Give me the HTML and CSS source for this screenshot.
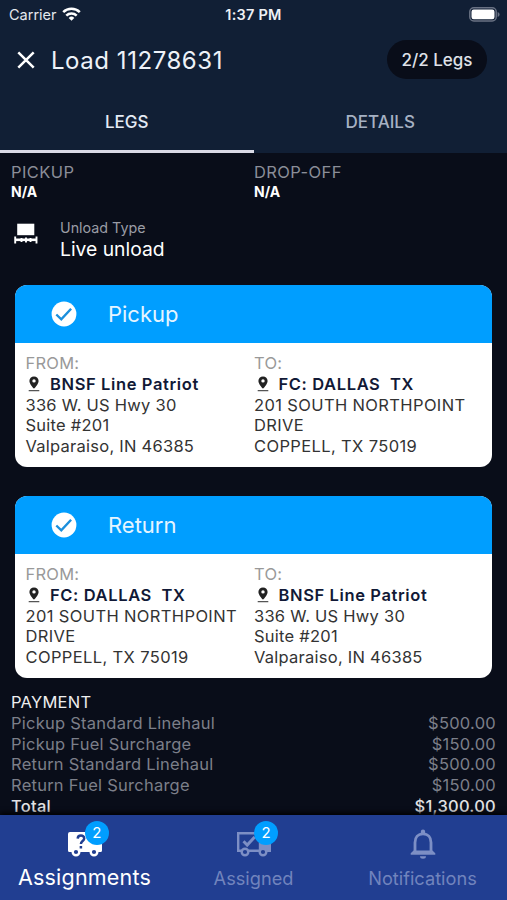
FILE: index.html
```html
<!DOCTYPE html>
<html lang="en">
<head>
<meta charset="utf-8">
<title>Load 11278631</title>
<link rel="stylesheet" href="styles.css">
</head>
<body>
<svg class="defs" width="0" height="0">
  <symbol id="check" viewBox="0 0 26 26"><circle cx="13" cy="13" r="12.4" fill="#fff"/><path d="M5.300 13.500l5 4.800 9.800-10.500" fill="none" stroke="#1b8fdc" stroke-width="2.4"/></symbol>
  <symbol id="pin" viewBox="0 0 12 16"><path fill-rule="evenodd" d="M6 .5C3.300.5 1.400 2.500 1.400 4.900 1.400 8.200 6 12.600 6 12.600S10.600 8.200 10.600 4.900C10.600 2.500 8.700.5 6 .5zM6 3.200a1.700 1.700 0 1 1 0 3.400 1.700 1.700 0 0 1 0-3.400z" fill="#222"/><path d="M.7 14.600h10.600" stroke="#555" stroke-width="1.300"/></symbol>
</svg>
<div class="app">
  <header class="top">
    <div class="status">
      <div class="carrier"><span>Carrier</span>
        <svg width="19" height="14" viewBox="0 0 19 14" fill="none" stroke="#fff" stroke-width="2.500"><path d="M1.200 5.200a11.800 11.800 0 0 1 16.600 0"/><path d="M4.300 8.700a7.400 7.400 0 0 1 10.400 0"/><path d="M9.500 13.800L6.700 10.900a4 4 0 0 1 5.600 0z" fill="#fff" stroke="none"/></svg>
      </div>
      <div class="clock">1:37 PM</div>
      <svg class="battery" width="31" height="15" viewBox="0 0 31 15"><rect x=".8" y=".8" width="26.400" height="13.200" rx="4" fill="none" stroke="#697183" stroke-width="1.500"/><rect x="2.500" y="2.500" width="23" height="9.800" rx="2.200" fill="#fff"/><path d="M28.600 5v5c1.300-.5 2-1.400 2-2.500s-.7-2-2-2.500z" fill="#697183"/></svg>
    </div>
    <div class="title-row">
      <svg width="18" height="18" viewBox="0 0 18 18"><path d="M1.300 1.300l15.400 15.400M16.700 1.300L1.300 16.700" stroke="#fff" stroke-width="2.500"/></svg>
      <h1>Load 11278631</h1>
      <div class="pill">2/2 Legs</div>
    </div>
    <nav class="tabs"><div class="tab active">LEGS</div><div class="tab">DETAILS</div></nav>
  </header>
  <main class="content">
    <section class="dates">
      <div><div class="label">PICKUP</div><div class="value">N/A</div></div>
      <div><div class="label">DROP-OFF</div><div class="value">N/A</div></div>
    </section>
    <section class="unload">
      <svg width="24" height="22" viewBox="0 0 24 22" fill="#fff"><path d="M3.200 .7H20.300V12.200H3.200z"/><path d="M1.200 13.500v7M7.500 15v4M12 14.500v5M16.500 15v4M22.500 13.500v7" stroke="#fff" stroke-width="1.900"/><path d="M1 16.800h22" stroke="#fff" stroke-width="2.600"/></svg>
      <div><div class="unload-label">Unload Type</div><div class="unload-value">Live unload</div></div>
    </section>
    <article class="card">
      <div class="card-head"><svg width="26" height="26"><use href="#check"/></svg><h2>Pickup</h2></div>
      <div class="card-body">
        <div><div class="dir">FROM:</div><div class="place"><svg width="12" height="16"><use href="#pin"/></svg><b>BNSF Line Patriot</b></div><div>336 W. US Hwy 30</div><div>Suite #201</div><div>Valparaiso, IN 46385</div></div>
        <div><div class="dir">TO:</div><div class="place"><svg width="12" height="16"><use href="#pin"/></svg><b>FC: DALLAS&nbsp; TX</b></div><div class="caps">201 SOUTH NORTHPOINT<br>DRIVE</div><div class="caps">COPPELL, TX 75019</div></div>
      </div>
    </article>
    <article class="card">
      <div class="card-head"><svg width="26" height="26"><use href="#check"/></svg><h2>Return</h2></div>
      <div class="card-body">
        <div><div class="dir">FROM:</div><div class="place"><svg width="12" height="16"><use href="#pin"/></svg><b>FC: DALLAS&nbsp; TX</b></div><div class="caps">201 SOUTH NORTHPOINT<br>DRIVE</div><div class="caps">COPPELL, TX 75019</div></div>
        <div><div class="dir">TO:</div><div class="place"><svg width="12" height="16"><use href="#pin"/></svg><b>BNSF Line Patriot</b></div><div>336 W. US Hwy 30</div><div>Suite #201</div><div>Valparaiso, IN 46385</div></div>
      </div>
    </article>
    <section class="payment">
      <div class="row strong"><span>PAYMENT</span></div>
      <div class="row"><span>Pickup Standard Linehaul</span><span>$500.00</span></div>
      <div class="row"><span>Pickup Fuel Surcharge</span><span>$150.00</span></div>
      <div class="row"><span>Return Standard Linehaul</span><span>$500.00</span></div>
      <div class="row"><span>Return Fuel Surcharge</span><span>$150.00</span></div>
      <div class="row total"><span>Total</span><span>$1,300.00</span></div>
    </section>
  </main>
  <footer class="nav">
    <div class="item active">
      <div class="icon">
        <svg width="36" height="26" viewBox="0 0 36 26"><path d="M3 1H25V6H30L35 13V19.500Q35 21 33.500 21H2.500Q1 21 1 19.500V3Q1 1 3 1z" fill="#fff"/><circle cx="9" cy="21" r="3.300" fill="#213e91" stroke="#fff" stroke-width="2.400"/><circle cx="27" cy="21" r="3.300" fill="#213e91" stroke="#fff" stroke-width="2.400"/><path d="M10.700 7.600C10.800 3.600 17.200 3.700 17.200 7.400 17.200 10 13.900 10.100 13.900 13M13.900 15v2.500" fill="none" stroke="#213e91" stroke-width="2.500"/></svg>
        <span class="badge">2</span>
      </div>
      <div class="name">Assignments</div>
    </div>
    <div class="item">
      <div class="icon">
        <svg width="36" height="26" viewBox="0 0 36 26"><path d="M24 6h5.500L35 13v8H24z" fill="#7d8fc5"/><path d="M2.200 2.200H24V19.700H2.200z" fill="none" stroke="#7d8fc5" stroke-width="2.400"/><circle cx="9" cy="21" r="3.300" fill="#213e91" stroke="#7d8fc5" stroke-width="2.400"/><circle cx="27" cy="21" r="3.300" fill="#213e91" stroke="#7d8fc5" stroke-width="2.400"/><path d="M7.500 10.300l3.700 3.700 7.500-8" fill="none" stroke="#7d8fc5" stroke-width="3"/></svg>
        <span class="badge">2</span>
      </div>
      <div class="name">Assigned</div>
    </div>
    <div class="item">
      <div class="icon bell">
        <svg width="26" height="30" viewBox="0 0 26 30"><path d="M5 24V13.500C5 8.300 8 4.900 13 4.900s8 3.400 8 8.600V24" fill="none" stroke="#7d8fc5" stroke-width="2.800"/><path d="M3.600 21.500h18.800L25.300 24.300V25.800H.7V24.300z" fill="#7d8fc5"/><path d="M10.800 4V2.800a2.200 2.200 0 0 1 4.400 0V4zM10 27.300h6a3 2.500 0 0 1-6 0z" fill="#7d8fc5"/></svg>
      </div>
      <div class="name">Notifications</div>
    </div>
  </footer>
</div>
</body>
</html>
```
FILE: styles.css
```css
* { box-sizing: border-box; }
body { margin: 0; font-family: Inter, sans-serif; background: #090d19; color: #fff; }
h1, h2 { margin: 0; font-weight: 400; }
svg { display: block; flex: none; }
.defs { position: absolute; }
.app { width: 507px; height: 900px; display: flex; flex-direction: column; overflow: hidden; }
.top { height: 153px; flex: none; background: #111f35; display: flex; flex-direction: column; }
.status { height: 28px; display: grid; grid-template-columns: 1fr auto 1fr; align-items: center; padding: 0 7px 0 9px; }
.carrier { display: flex; align-items: center; gap: 5px; font-size: 14.500px; color: #e4e8ee; margin-right: 2px; }
.clock { font-size: 14.500px; font-weight: 600; letter-spacing: .25px; color: #edf0f5; margin-left: -2px; }
.battery { justify-self: end; }
.title-row { height: 64px; display: flex; align-items: center; padding: 0 20px 0 17px; }
.title-row h1 { font-size: 24px; letter-spacing: .55px; margin-left: 16px; color: #eef2f8; }
.pill { margin: 0 0 1px auto; width: 100px; height: 39px; border-radius: 20px; background: #090d19; display: flex; align-items: center; justify-content: center; font-size: 17px; font-weight: 500; color: #dfe1e8; }
.tabs { flex: 1; display: flex; }
.tab { flex: 1; text-align: center; line-height: 60px; height: 61px; font-size: 17px; font-weight: 500; color: #a6b1c3; border-bottom: 3px solid transparent; }
.tab.active { color: #e4ebf5; border-color: #dadae6; }
.content { flex: 1; min-height: 0; overflow: hidden; padding: 9px 11px 0; }
.dates { display: grid; grid-template-columns: 243px 1fr; }
.label { font-size: 16.500px; line-height: 20px; letter-spacing: .4px; color: #8b8e98; }
.value { font-size: 14px; line-height: 19px; font-weight: 700; }
.unload { display: flex; align-items: flex-start; gap: 22px; margin-top: 17px; padding-left: 3px; height: 66.500px; }
.unload svg { margin-top: 5px; }
.unload-label { font-size: 14.300px; line-height: 20px; color: #9a9ca5; }
.unload-value { font-size: 19.300px; line-height: 22px; }
.card { margin: 0 4px 29px 4.400px; height: 182px; border-radius: 12px; overflow: hidden; background: #fff; }
.card-head { height: 58px; background: #009eff; display: flex; align-items: center; padding-left: 35.600px; gap: 31px; }
.card-head h2 { font-size: 22px; color: #e6f5ff; }
.card-body { display: grid; grid-template-columns: 228.500px 1fr; padding: 10.500px 0 0 10.100px; font-size: 16.500px; line-height: 20.800px; letter-spacing: .25px; color: #333; }
.caps { letter-spacing: .37px; }
.dir { color: #999; }
.place { display: flex; align-items: center; padding-left: 3px; gap: 9.500px; color: #111936; }
.place b { font-weight: 600; letter-spacing: .62px; }
.payment { font-size: 16.500px; line-height: 20.800px; letter-spacing: .25px; color: #7c7f89; margin-top: -14.500px; }
.row { display: flex; justify-content: space-between; }
.strong { color: #eee; }
.total { color: #e2e2e4; font-weight: 500; }
.nav { height: 85px; flex: none; background: #213e91; display: grid; grid-template-columns: 169px 169px 169px; box-shadow: 0 -2px 5px #000; z-index: 1; }
.item { display: flex; flex-direction: column; align-items: center; color: #7184bd; font-size: 18.200px; }
.item.active { color: #fff; font-size: 21.500px; letter-spacing: .2px; }
.item.active .name { line-height: 32px; }
.icon { position: relative; height: 46px; padding-top: 16px; }
.bell { padding-top: 14px; }
.badge { position: absolute; left: 18.500px; top: 6px; width: 24px; height: 24px; border-radius: 50%; background: #009eff; color: #fff; font-size: 15px; line-height: 24px; text-align: center; }
.name { line-height: 35px; }
```
